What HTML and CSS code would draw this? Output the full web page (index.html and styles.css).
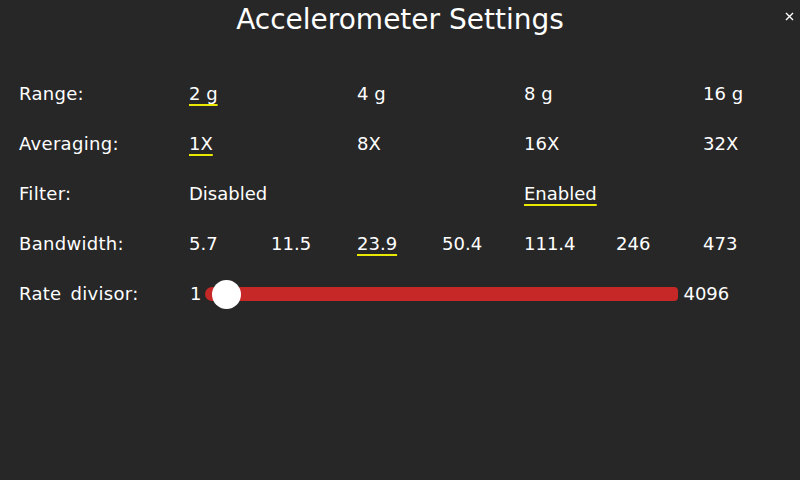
FILE: index.html
```html
<!DOCTYPE html>
<html>
<head>
<meta charset="utf-8">
<link rel="stylesheet" href="styles.css">
</head>
<body>
<div class="screen">
  <header class="title-bar">
    <h1 class="title">Accelerometer Settings</h1>
    <button class="close" aria-label="Close">
      <svg width="9" height="9" viewBox="0 0 9 9"><path d="M1 1L8 8M8 1L1 8" stroke="#ffffff" stroke-width="1.4" fill="none"/></svg>
    </button>
  </header>
  <div class="settings">
    <div class="label">Range:</div>
    <div class="opt c1"><span class="sel">2 g</span></div>
    <div class="opt c3">4 g</div>
    <div class="opt c5">8 g</div>
    <div class="opt c7">16 g</div>

    <div class="label">Averaging:</div>
    <div class="opt c1"><span class="sel">1X</span></div>
    <div class="opt c3">8X</div>
    <div class="opt c5">16X</div>
    <div class="opt c7">32X</div>

    <div class="label">Filter:</div>
    <div class="opt c1">Disabled</div>
    <div class="opt c5"><span class="sel">Enabled</span></div>

    <div class="label">Bandwidth:</div>
    <div class="opt c1">5.7</div>
    <div class="opt c2">11.5</div>
    <div class="opt c3"><span class="sel">23.9</span></div>
    <div class="opt c4">50.4</div>
    <div class="opt c5">111.4</div>
    <div class="opt c6">246</div>
    <div class="opt c7">473</div>

    <div class="label">Rate divisor:</div>
    <div class="slider-row">
      <span class="min">1</span>
      <div class="track"><div class="knob"></div></div>
      <span class="max">4096</span>
    </div>
  </div>
</div>
</body>
</html>
```
FILE: styles.css
```css
html, body {
  margin: 0;
  padding: 0;
  background: #272727;
}
.screen {
  width: 800px;
  height: 480px;
  background: #272727;
  color: #ffffff;
  font-family: "DejaVu Sans", sans-serif;
  overflow: hidden;
}
.title-bar {
  position: relative;
  height: 40px;
}
.title {
  margin: 0;
  font-size: 28px;
  font-weight: normal;
  line-height: 40px;
  text-align: center;
}
.close {
  position: absolute;
  right: 6px;
  top: 12px;
  width: 9px;
  height: 9px;
  padding: 0;
  border: 0;
  background: none;
  display: block;
}
.close svg { display: block; }
.settings {
  display: grid;
  grid-template-columns: 170px 82px 86px 85px 82px 92px 87px 1fr;
  grid-auto-rows: 50px;
  padding: 29px 0 0 19px;
  font-size: 18px;
  line-height: 50px;
}
.label { grid-column: 1; letter-spacing: 0.3px; word-spacing: 3px; }
.c1 { grid-column: 2; }
.c2 { grid-column: 3; }
.c3 { grid-column: 4; }
.c4 { grid-column: 5; }
.c5 { grid-column: 6; }
.c6 { grid-column: 7; }
.c7 { grid-column: 8; }
.opt { white-space: nowrap; }
.sel {
  text-decoration: underline;
  text-decoration-color: #e8e800;
  text-decoration-thickness: 2px;
  text-underline-offset: 4px;
}
.slider-row {
  grid-column: 2 / 9;
  display: flex;
  align-items: center;
}
.min { margin-left: 1px; }
.track {
  position: relative;
  margin-left: 4px;
  width: 473px;
  height: 14px;
  background: #c62828;
  border-radius: 7px 4px 4px 7px;
}
.knob {
  position: absolute;
  left: 7px;
  top: -7.5px;
  width: 29px;
  height: 29px;
  border-radius: 50%;
  background: #ffffff;
}
.max { margin-left: 5px; }
```
